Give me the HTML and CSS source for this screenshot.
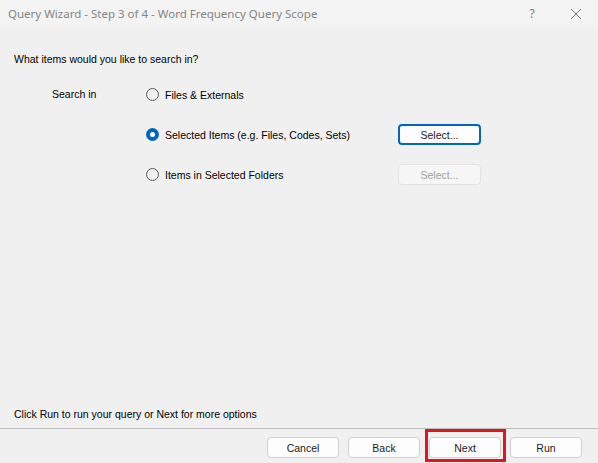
FILE: index.html
```html
<!DOCTYPE html>
<html lang="en">
<head>
  <meta charset="UTF-8">
  <meta name="viewport" content="width=device-width, initial-scale=1.0">
  <title>Query Wizard - Step 3 of 4</title>
  <link rel="stylesheet" href="styles.css">
</head>
<body>
  <div class="window">
    <div class="titlebar">
      <span class="title">Query Wizard - Step 3 of 4 - Word Frequency Query Scope</span>
      <span class="help">?</span>
      <span class="close">
        <svg width="12" height="12" viewBox="0 0 12 12">
          <path d="M1 1 L11 11 M11 1 L1 11" stroke="#7a7a7a" stroke-width="1" fill="none"/>
        </svg>
      </span>
    </div>

    <div class="content">
      <p class="question">What items would you like to search in?</p>

      <div class="scope">
        <span class="scope-label">Search in</span>
        <div class="options">
          <div class="option">
            <span class="radio"></span>
            <span class="option-text">Files &amp; Externals</span>
          </div>
          <div class="option">
            <span class="radio checked"></span>
            <span class="option-text">Selected Items (e.g. Files, Codes, Sets)</span>
            <button class="btn select focused">Select...</button>
          </div>
          <div class="option">
            <span class="radio"></span>
            <span class="option-text">Items in Selected Folders</span>
            <button class="btn select" disabled>Select...</button>
          </div>
        </div>
      </div>

      <p class="hint">Click Run to run your query or Next for more options</p>
    </div>

    <div class="footer">
      <button class="btn">Cancel</button>
      <button class="btn">Back</button>
      <span class="marked"><button class="btn">Next</button></span>
      <button class="btn">Run</button>
    </div>
  </div>
</body>
</html>
```

FILE: styles.css
```css
* {
  box-sizing: border-box;
}
body {
  margin: 0;
  background-color: #f0f0f0;
  font-family: 'Liberation Sans', Arial, sans-serif;
}

.window {
  width: 598px;
  height: 463px;
  display: flex;
  flex-direction: column;
  background-color: #f0f0f0;
  overflow: hidden;
}

.titlebar {
  height: 27px;
  flex-shrink: 0;
  display: flex;
  align-items: center;
  padding: 0 0 0 8px;
  background-color: #f3f3f3;
  color: #858585;
  font-family: 'Noto Sans', 'Liberation Sans', sans-serif;
  font-size: 11.5px;
}

.title {
  flex: 1;
  white-space: nowrap;
}

.help {
  width: 44px;
  text-align: center;
  font-size: 12px;
  color: #7a7a7a;
}

.close {
  width: 44px;
  display: flex;
  justify-content: center;
  align-items: center;
}

.content {
  flex: 1;
  display: flex;
  flex-direction: column;
  padding: 0 14px;
  font-size: 10.5px;
  color: #000;
}

.question {
  margin: 26px 0 0;
  line-height: 13px;
}

.scope {
  display: flex;
  margin-top: 18px;
  padding-left: 38px;
}

.scope-label {
  width: 94px;
  line-height: 21px;
}

.options {
  display: flex;
  flex-direction: column;
  gap: 19px;
}

.option {
  display: flex;
  align-items: center;
  height: 21px;
}

.radio {
  width: 13px;
  height: 13px;
  border: 1px solid #5c5c5c;
  border-radius: 50%;
  margin-right: 6px;
  display: flex;
  align-items: center;
  justify-content: center;
}

.radio.checked {
  border: none;
  background-color: #0067c0;
}

.radio.checked::after {
  content: "";
  width: 5px;
  height: 5px;
  border-radius: 50%;
  background-color: #fff;
}

.option-text {
  width: 233px;
  white-space: nowrap;
}

.hint {
  margin: auto 0 7px;
  line-height: 13px;
}

.btn {
  width: 72px;
  height: 21px;
  padding: 0;
  background-color: #fdfdfd;
  border: 1px solid #d0d0d0;
  border-radius: 4px;
  font-family: 'Liberation Sans', Arial, sans-serif;
  font-size: 10.5px;
  color: #1a1a1a;
}

.btn.select {
  width: 83px;
}

.btn.focused {
  border: 2px solid #0067c0;
}

.btn:disabled {
  background-color: #f6f6f6;
  border-color: #e3e3e3;
  color: #a0a0a0;
}

.footer {
  height: 35px;
  flex-shrink: 0;
  display: flex;
  align-items: flex-start;
  justify-content: flex-end;
  gap: 9px;
  padding: 8px 16px 0 0;
  border-top: 1px solid #bdbdbd;
}

.marked {
  position: relative;
  display: flex;
}

.marked::after {
  content: "";
  position: absolute;
  top: -8px;
  bottom: -4px;
  left: -4px;
  right: -5px;
  border: 3px solid #e0151f;
  pointer-events: none;
}
```
